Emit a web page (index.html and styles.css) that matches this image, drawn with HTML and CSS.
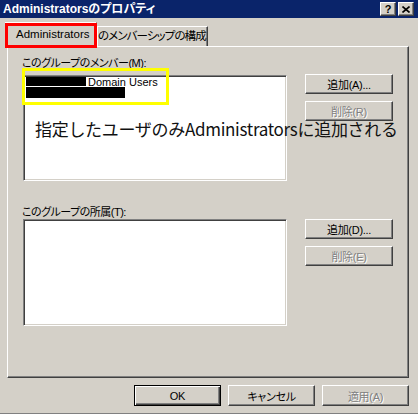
FILE: index.html
```html
<!DOCTYPE html>
<html lang="ja">
<head>
  <meta charset="UTF-8">
  <title>Administratorsのプロパティ</title>
  <link rel="stylesheet" href="styles.css">
</head>
<body>
  <div class="window">
    <div class="titlebar">
      <span class="title">Administratorsのプロパティ</span>
      <div class="caption-buttons">
        <span class="cap-btn help">?</span>
        <span class="cap-btn">
          <svg width="8" height="7" viewBox="0 0 8 7">
            <path d="M0.5 0.5 L7.5 6.5 M7.5 0.5 L0.5 6.5" stroke="#000" stroke-width="1.6" fill="none"/>
          </svg>
        </span>
      </div>
    </div>

    <div class="tabs">
      <div class="tab active">Administrators</div>
      <div class="tab">のメンバーシップの構成</div>
    </div>

    <div class="panel">
      <div class="group">
        <div class="group-label first">このグループのメンバー(M):</div>
        <div class="group-body">
          <div class="listbox members">
            <div class="list-item"><span class="redact short"></span><span class="item-text">Domain Users</span></div>
            <div class="list-item second"><span class="redact long"></span></div>
          </div>
          <div class="side-buttons">
            <button class="btn">追加(A)...</button>
            <button class="btn" disabled>削除(R)</button>
          </div>
        </div>
      </div>

      <div class="group">
        <div class="group-label">このグループの所属(T):</div>
        <div class="group-body">
          <div class="listbox member-of"></div>
          <div class="side-buttons">
            <button class="btn">追加(D)...</button>
            <button class="btn" disabled>削除(E)</button>
          </div>
        </div>
      </div>
    </div>

    <div class="footer">
      <button class="btn default">OK</button>
      <button class="btn">キャンセル</button>
      <button class="btn" disabled>適用(A)</button>
    </div>

    <!-- 注釈 -->
    <div class="mark-red"></div>
    <div class="mark-yellow"></div>
    <div class="note">指定したユーザのみAdministratorsに追加される</div>
  </div>
</body>
</html>
```

FILE: styles.css
```css
body {
  margin: 0;
  padding: 0;
  background-color: #d4d0c8;
  font-family: "Liberation Sans", "Noto Sans CJK JP", sans-serif;
  font-size: 11px;
  font-feature-settings: "palt" 1;
  color: #000;
}

.window {
  position: relative;
  width: 418px;
  height: 414px;
  box-sizing: border-box;
  background-color: #d4d0c8;
  border-bottom: 1px solid #808080;
  overflow: hidden;
}

/* タイトルバー */
.titlebar {
  height: 18px;
  background-color: #0a246a;
  display: flex;
  align-items: center;
  justify-content: space-between;
  padding: 0 4px 0 3px;
}

.title {
  color: #fff;
  font-weight: bold;
  font-size: 12px;
  line-height: 18px;
  white-space: nowrap;
}

.caption-buttons {
  display: flex;
  gap: 2px;
}

.cap-btn {
  width: 16px;
  height: 14px;
  box-sizing: border-box;
  background-color: #d4d0c8;
  border: 1px solid;
  border-color: #fff #404040 #404040 #fff;
  box-shadow: inset -1px -1px #808080;
  display: flex;
  align-items: center;
  justify-content: center;
  font-weight: bold;
  font-size: 11px;
  line-height: 1;
}

/* タブ */
.tabs {
  height: 28px;
  display: flex;
  align-items: flex-end;
  padding-left: 5px;
}

.tab {
  height: 20px;
  box-sizing: border-box;
  border-top: 1px solid #fff;
  border-left: 1px solid #fff;
  border-right: 1px solid #404040;
  box-shadow: inset -1px 0 #808080;
  line-height: 18px;
  white-space: nowrap;
}

.tab.active {
  position: relative;
  z-index: 1;
  width: 92px;
  height: 26px;
  margin-bottom: -2px;
  padding-left: 10px;
  font-size: 11.5px;
  line-height: 22px;
  background-color: #d4d0c8;
}

.tab:not(.active) {
  width: 111px;
  padding-left: 0;
  font-size: 11.5px;
  letter-spacing: -0.9px;
  overflow: hidden;
}

.panel {
  width: 402px;
  height: 332px;
  margin-left: 7px;
  box-sizing: border-box;
  border: 1px solid;
  border-color: #fff #404040 #404040 #fff;
  box-shadow: inset -1px -1px #808080;
  padding: 9px 0 0 14px;
}

.group-label {
  line-height: 14px;
  height: 14px;
  white-space: nowrap;
  letter-spacing: -0.5px;
}

.group-label.first {
  margin-bottom: 5px;
}

.group + .group {
  margin-top: 24px;
}

.group-body {
  display: flex;
  gap: 18px;
}

.listbox {
  width: 264px;
  margin-left: 1px;
  box-sizing: border-box;
  background-color: #fff;
  border: 1px solid;
  border-color: #808080 #fff #fff #808080;
  box-shadow: inset 1px 1px #404040, inset -1px -1px #d4d0c8;
  padding: 1px 0 0 2px;
}

.listbox.members {
  height: 106px;
}

.listbox.member-of {
  height: 107px;
}

.list-item {
  display: flex;
  align-items: flex-start;
  height: 11px;
  line-height: 10px;
}

.list-item.second {
  height: 12px;
}

.redact {
  display: inline-block;
  background-color: #000;
}

.redact.short {
  width: 60px;
  height: 9px;
}

.redact.long {
  width: 99px;
  height: 11px;
  margin-top: -1px;
}

.item-text {
  margin-left: 2px;
}

.side-buttons {
  display: flex;
  flex-direction: column;
  gap: 7px;
}

.members + .side-buttons {
  margin-top: -1px;
}

.btn {
  width: 88px;
  height: 20px;
  box-sizing: border-box;
  padding: 0;
  font: inherit;
  color: #000;
  background-color: #d4d0c8;
  border: 1px solid;
  border-color: #fff #404040 #404040 #fff;
  box-shadow: inset -1px -1px #808080;
  border-radius: 0;
  letter-spacing: -0.3px;
}

.btn:disabled {
  color: #808080;
  text-shadow: 1px 1px #fff;
}

.footer {
  display: flex;
  justify-content: flex-end;
  gap: 7px;
  margin-top: 7px;
  padding-right: 9px;
}

.footer .btn {
  width: 87px;
  height: 21px;
}

.btn.default {
  border: 1px solid #000;
  box-shadow: inset 1px 1px #fff, inset -1px -1px #404040, inset -2px -2px #808080;
}

/* 注釈の枠と文字 */
.mark-red {
  position: absolute;
  left: 5px;
  top: 23px;
  width: 92px;
  height: 25px;
  box-sizing: border-box;
  border: 3px solid #ff0000;
  z-index: 2;
}

.mark-yellow {
  position: absolute;
  left: 22px;
  top: 68px;
  width: 147px;
  height: 37px;
  box-sizing: border-box;
  border: 3px solid #ffff00;
}

.note {
  position: absolute;
  left: 35px;
  top: 118px;
  font-family: "Noto Sans CJK JP", sans-serif;
  font-feature-settings: normal;
  font-size: 17px;
  letter-spacing: -0.3px;
  line-height: 22px;
  white-space: nowrap;
  color: #111;
}
```
